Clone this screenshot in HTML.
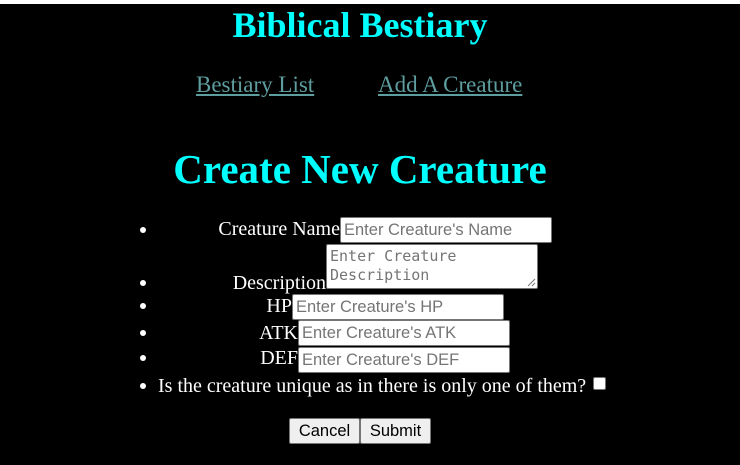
<!DOCTYPE html>
<html><head><style>
html,body{margin:0;padding:0}
body{width:740px;height:465px;background:#000;position:relative;overflow:hidden;font-family:"Liberation Serif",serif;color:#fff}
.top{position:absolute;left:0;top:0;width:740px;height:4px;background:#fff}
.a{position:absolute;white-space:nowrap}
h1,h2{margin:0;color:#0ff;font-weight:bold}
.lnk{color:#5f9ea0;text-decoration:underline;font-size:23px}
.lbl{font-size:20px;text-align:right}
.in{position:absolute;box-sizing:border-box;background:#fff;border:1px solid #767676;border-radius:2px;color:#757575;font-family:"Liberation Sans",sans-serif;font-size:16.5px;padding:3px 3px 0;white-space:nowrap;overflow:hidden}
.ta{font-family:"DejaVu Sans Mono","Liberation Mono",monospace;font-size:15px;line-height:19px;white-space:normal;padding:2px 3px}
.dot{position:absolute;width:6px;height:6px;border-radius:50%;background:#fff}
.btn{position:absolute;box-sizing:border-box;background:#efefef;border:1px solid #767676;border-radius:2px;color:#000;font-family:"Liberation Sans",sans-serif;font-size:16.5px;text-align:center;line-height:25px}
</style></head><body>
<div class="top"></div>
<h1 class="a" style="left:0;width:720px;text-align:center;top:4px;font-size:36px">Biblical Bestiary</h1>
<div class="a lnk" style="left:196px;top:72px">Bestiary List</div>
<div class="a lnk" style="left:378px;top:72px">Add A Creature</div>
<h2 class="a" style="left:0;width:720px;text-align:center;top:145px;font-size:41px">Create New Creature</h2>

<div class="dot" style="left:140px;top:227px"></div>
<div class="a lbl" style="right:400px;top:218px">Creature Name</div>
<div class="in" style="left:340px;top:217px;width:212px;height:26px">Enter Creature's Name</div>

<div class="dot" style="left:140px;top:280px"></div>
<div class="a lbl" style="right:414px;top:272px">Description</div>
<div class="in ta" style="left:326px;top:244px;width:212px;height:45px">Enter Creature Description</div>
<svg class="a" style="left:527px;top:278px" width="9" height="9"><path d="M1 8L8 1M5 8L8 5" stroke="#777" stroke-width="1"/></svg>

<div class="dot" style="left:140px;top:303px"></div>
<div class="a lbl" style="right:448px;top:295px">HP</div>
<div class="in" style="left:292px;top:294px;width:212px;height:26px">Enter Creature's HP</div>

<div class="dot" style="left:140px;top:330px"></div>
<div class="a lbl" style="right:442px;top:322px">ATK</div>
<div class="in" style="left:298px;top:320px;width:212px;height:26px">Enter Creature's ATK</div>

<div class="dot" style="left:140px;top:355px"></div>
<div class="a lbl" style="right:442px;top:347px">DEF</div>
<div class="in" style="left:298px;top:347px;width:212px;height:26px">Enter Creature's DEF</div>

<div class="dot" style="left:140px;top:383px"></div>
<div class="a lbl" style="left:158px;top:375px">Is the creature unique as in there is only one of them?</div>
<div class="a" style="left:593px;top:377px;width:13px;height:13px;box-sizing:border-box;background:#fff;border:1px solid #767676;border-radius:2px"></div>

<div class="btn" style="left:289px;top:418px;width:71px;height:26px">Cancel</div>
<div class="btn" style="left:360px;top:418px;width:71px;height:26px">Submit</div>
</body></html>
